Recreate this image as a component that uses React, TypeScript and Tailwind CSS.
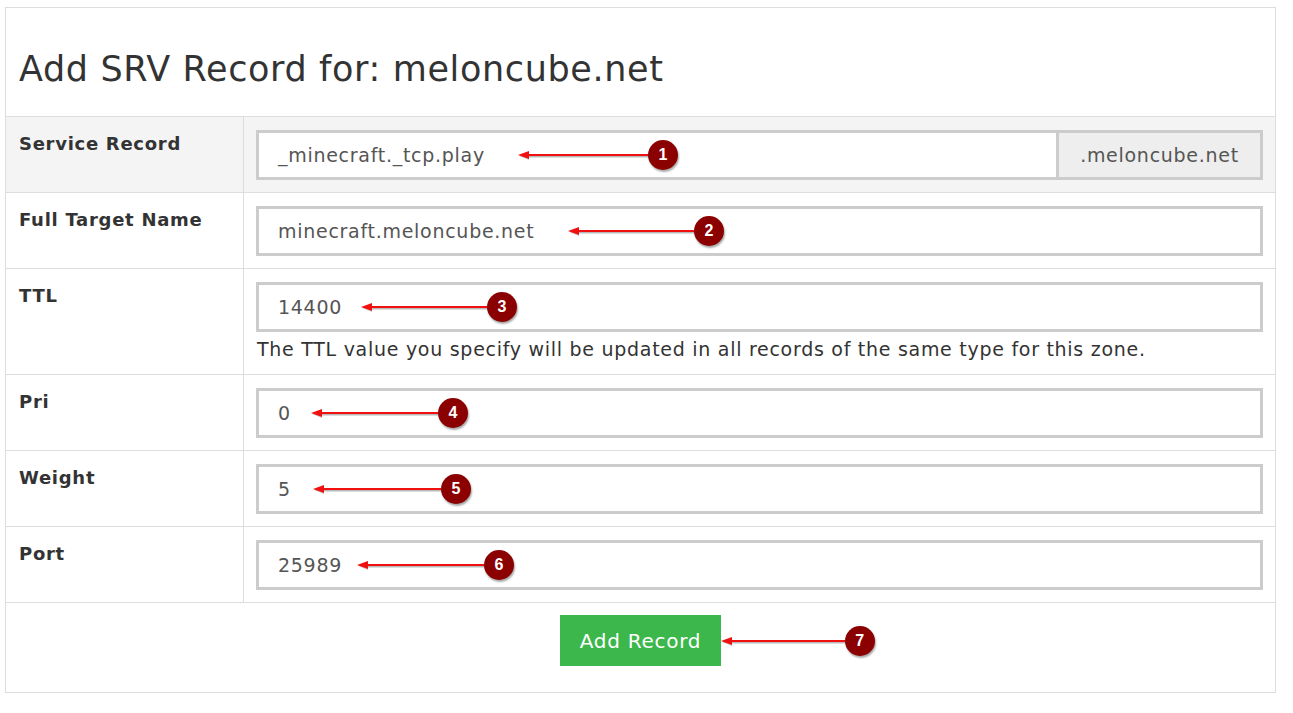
import React from 'react';

// --- Annotation: red arrow + numbered marker ---
interface MarkProps {
  n: number;
  from: number; // arrow tip, px from the left of the parent
  to: number; // circle centre, px from the left of the parent
}

const Mark: React.FC<MarkProps> = ({ n, from, to }) => {
  const len = to - from - 14;
  return (
    <div
      className="absolute top-1/2 -translate-y-1/2 flex items-center pointer-events-none"
      style={{ left: from }}
    >
      <svg width={len} height={14} viewBox={`0 0 ${len} 14`} className="block">
        <line x1={9} y1={8.5} x2={len} y2={8.5} stroke="#b9b9b9" strokeWidth={2} />
        <polygon points={`1,8 11,4 11,12`} fill="#c9c9c9" />
        <line x1={8} y1={7} x2={len - 1} y2={7} stroke="#f01010" strokeWidth={2} />
        <polygon points={`0,7 11,3 11,11`} fill="#f01010" />
      </svg>
      <div className="w-[30px] h-[30px] -ml-[1px] rounded-full bg-[#8b0000] text-white flex items-center justify-center text-[16px] font-semibold tracking-normal shadow-[1px_2px_2px_rgba(0,0,0,0.35)] font-['Liberation_Sans',sans-serif]">
        {n}
      </div>
    </div>
  );
};

// --- Input field ---
const Field: React.FC<{ value: string; mark: MarkProps; addon?: string }> = ({ value, mark, addon }) => (
  <div className="relative flex">
    <div className="relative flex-1 h-[50px] border-[3px] border-[#cccccc] bg-white flex items-center pl-[19px] text-[19px] text-[#555555]">
      {value}
      <Mark {...mark} />
    </div>
    {addon && (
      <div className="w-[204px] h-[50px] border-[3px] border-l-0 border-[#cccccc] bg-[#eeeeee] flex items-center justify-center text-[19px] text-[#555555]">
        {addon}
      </div>
    )}
  </div>
);

const Row: React.FC<{ label: string; gray?: boolean; children: React.ReactNode }> = ({ label, gray, children }) => (
  <div className={`flex border-t border-[#dddddd] ${gray ? 'bg-[#f4f4f4]' : ''}`}>
    <div className="w-[238px] shrink-0 border-r border-[#dddddd] pl-[13px] pt-[13px] text-[18px] font-bold text-[#333333]">
      {label}
    </div>
    <div className="flex-1 px-[12px] pt-[13px] pb-[12px]">{children}</div>
  </div>
);

export default function App() {
  return (
    <div className="min-h-screen bg-white pt-[7px] pl-[5px] font-['DejaVu_Sans',sans-serif] tracking-[0.045em]">
      <div className="w-[1271px] border border-[#dddddd]">
        <h2 className="pl-[13px] pt-[41px] pb-[27px] text-[35px] leading-[40px] font-normal tracking-[0.018em] text-[#333333]">
          Add SRV Record for: meloncube.net
        </h2>

        <Row label="Service Record" gray>
          <Field value="_minecraft._tcp.play" addon=".meloncube.net" mark={{ n: 1, from: 259, to: 404 }} />
        </Row>
        <Row label="Full Target Name">
          <Field value="minecraft.meloncube.net" mark={{ n: 2, from: 309, to: 450 }} />
        </Row>
        <Row label="TTL">
          <Field value="14400" mark={{ n: 3, from: 102, to: 243 }} />
          <p className="pt-[4px] pl-[1px] text-[19px] leading-[26px] text-[#333333]">
            The TTL value you specify will be updated in all records of the same type for this zone.
          </p>
        </Row>
        <Row label="Pri">
          <Field value="0" mark={{ n: 4, from: 52, to: 194 }} />
        </Row>
        <Row label="Weight">
          <Field value="5" mark={{ n: 5, from: 54, to: 197 }} />
        </Row>
        <Row label="Port">
          <Field value="25989" mark={{ n: 6, from: 98, to: 240 }} />
        </Row>

        <div className="border-t border-[#dddddd] flex justify-center pt-[12px] pb-[26px]">
          <div className="relative">
            <button className="h-[51px] px-[20px] bg-[#3cb74c] text-white text-[20px]">Add Record</button>
            <Mark n={7} from={161} to={300} />
          </div>
        </div>
      </div>
    </div>
  );
}
